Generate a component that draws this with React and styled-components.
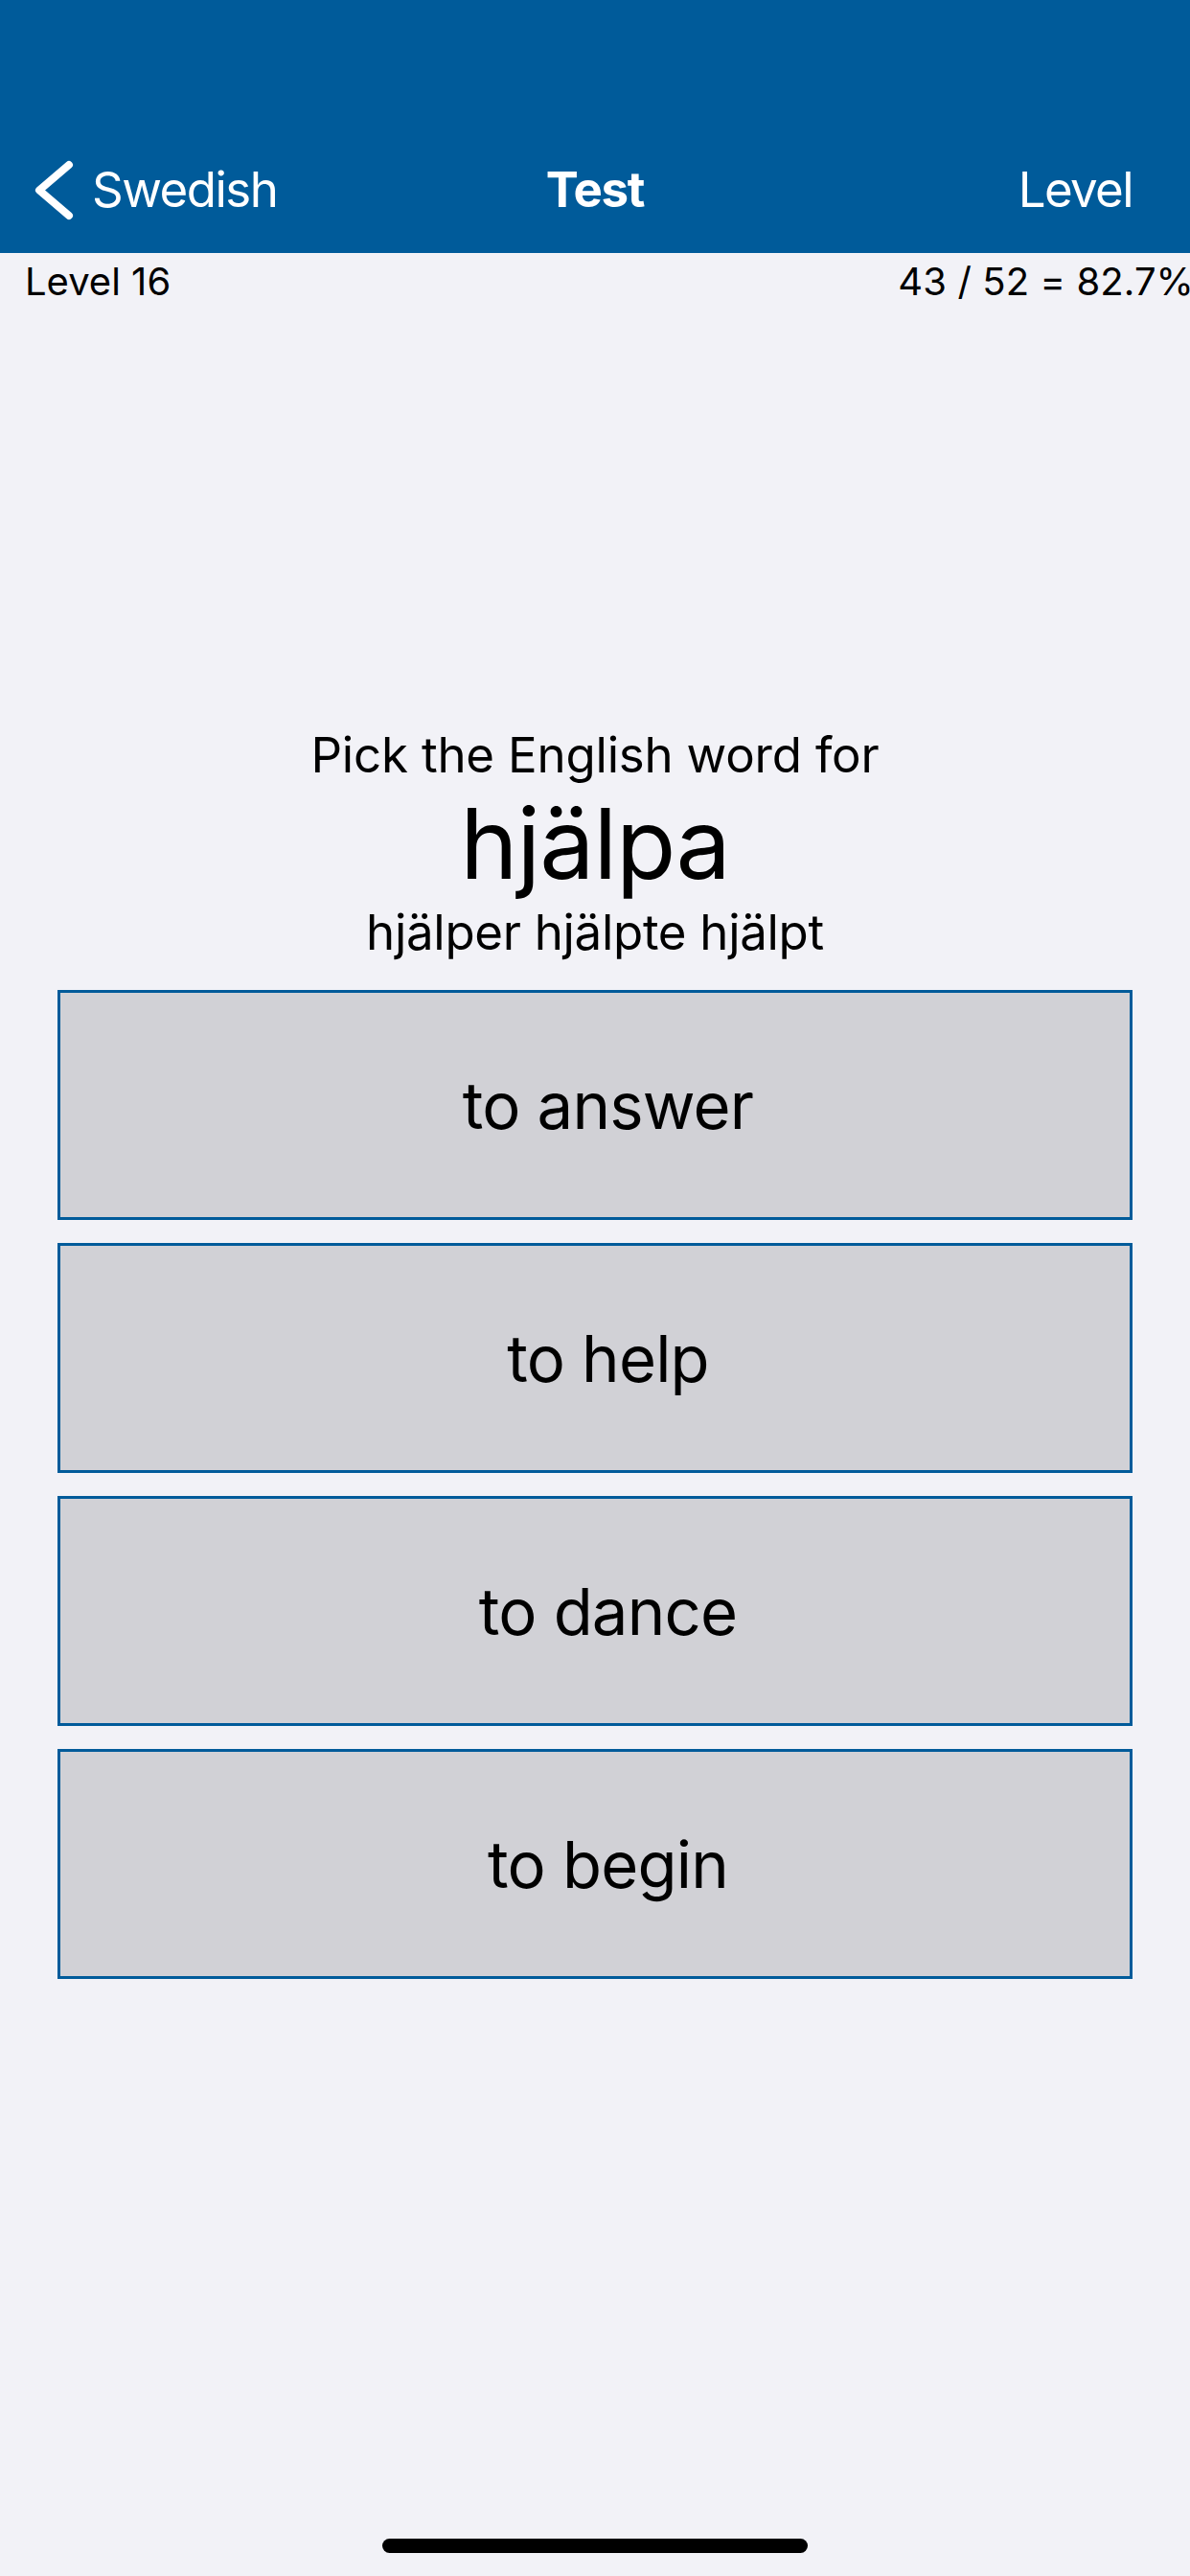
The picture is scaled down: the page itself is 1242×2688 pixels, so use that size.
import React from "react";
import styled, { createGlobalStyle } from "styled-components";

const GlobalStyle = createGlobalStyle`
  html, body {
    margin: 0;
    padding: 0;
    background: #f2f2f7;
  }
  body {
    font-family: Inter, "Noto Sans", "Liberation Sans", sans-serif;
    -webkit-font-smoothing: antialiased;
  }
  * { box-sizing: border-box; }
`;

const Screen = styled.div`
  position: relative;
  width: 1242px;
  min-height: 2688px;
  background: #f2f2f7;
  overflow: hidden;
  color: #000;
`;

const Header = styled.header`
  background: #005b9a;
  padding-top: 132px;
`;

const NavBar = styled.nav`
  height: 132px;
  display: grid;
  grid-template-columns: 1fr auto 1fr;
  align-items: center;
  color: #fff;
  font-size: 51px;
  line-height: 62px;
`;

const BackButton = styled.div`
  display: flex;
  align-items: center;
  gap: 16px;
  padding-left: 36px;
  letter-spacing: -1.5px;
`;

const Title = styled.div`
  font-weight: 700;
  letter-spacing: -1.3px;
`;

const NavAction = styled.div`
  justify-self: end;
  padding-right: 60px;
  letter-spacing: -1.6px;
`;

const StatusRow = styled.div`
  display: flex;
  justify-content: space-between;
  align-items: center;
  padding: 6px 0 0 26px;
  font-size: 40px;
  line-height: 48px;
  white-space: nowrap;
`;

const StatusRight = styled.span`
  margin-right: -4px;
  letter-spacing: 0.1px;
`;

const Content = styled.main`
  padding-top: 439px;
  display: flex;
  flex-direction: column;
  align-items: center;
`;

const Prompt = styled.div`
  font-size: ${(p) => p.$size}px;
  line-height: ${(p) => Math.round(p.$size * 1.21)}px;
  text-align: center;
  letter-spacing: ${(p) => p.$spacing || 0}px;
`;

const Choices = styled.div`
  align-self: stretch;
  margin: 29px 60px 0;
  display: flex;
  flex-direction: column;
  gap: 24px;
`;

const Choice = styled.button`
  height: 240px;
  border: 3px solid #005b9a;
  background: #d1d1d6;
  border-radius: 0;
  padding: 0 0 0 27px;
  margin: 0;
  display: flex;
  align-items: center;
  justify-content: center;
  font-family: inherit;
  font-size: 67px;
  line-height: 81px;
  color: #000;
  letter-spacing: -0.8px;
  cursor: pointer;
`;

const HomeIndicator = styled.div`
  position: absolute;
  left: 399px;
  bottom: 24px;
  width: 444px;
  height: 15px;
  border-radius: 8px;
  background: #000;
`;

const Chevron = () => (
  <svg width="44" height="70" viewBox="0 0 44 70" aria-hidden="true">
    <path
      d="M36 9 L5 35.5 L36 62"
      fill="none"
      stroke="#fff"
      strokeWidth="8"
      strokeLinecap="round"
      strokeLinejoin="round"
    />
  </svg>
);

const choices = ["to answer", "to help", "to dance", "to begin"];

export default function App() {
  return (
    <Screen>
      <GlobalStyle />
      <Header>
        <NavBar>
          <BackButton>
            <Chevron />
            <span>Swedish</span>
          </BackButton>
          <Title>Test</Title>
          <NavAction>Level</NavAction>
        </NavBar>
      </Header>
      <StatusRow>
        <span>Level 16</span>
        <StatusRight>43 / 52 = 82.7%</StatusRight>
      </StatusRow>
      <Content>
        <Prompt $size={51} $spacing={-0.2}>Pick the English word for</Prompt>
        <Prompt $size={102} $spacing={-1}>hjälpa</Prompt>
        <Prompt $size={51} $spacing={-0.3}>hjälper hjälpte hjälpt</Prompt>
        <Choices>
          {choices.map((c) => (
            <Choice key={c}>{c}</Choice>
          ))}
        </Choices>
      </Content>
      <HomeIndicator />
    </Screen>
  );
}
